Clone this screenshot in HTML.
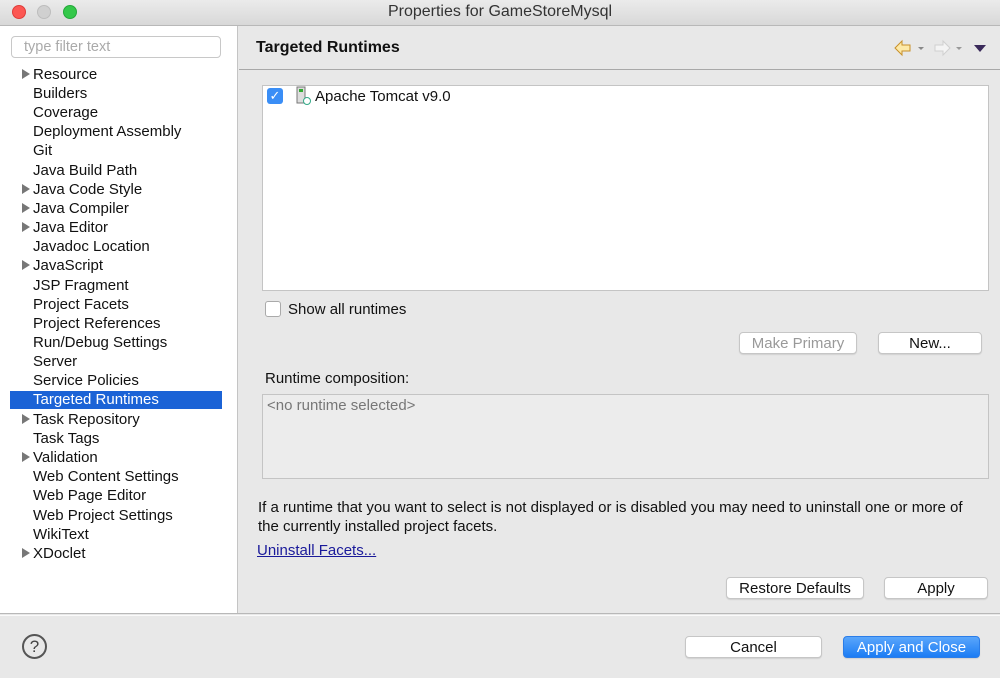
<!DOCTYPE html><html><head><style>
*{margin:0;padding:0;box-sizing:border-box}
body{width:1000px;height:678px;overflow:hidden;background:#e8e8e8;font-family:"Liberation Sans",sans-serif;font-size:15px;color:#111;position:relative}
.a{position:absolute}
.tb{left:0;top:0;width:1000px;height:26px;background:linear-gradient(#ebebeb,#d8d8d8);border-bottom:1px solid #b8b8b8;text-align:center;line-height:24px;font-size:16px;color:#333}
.dot{top:5px;width:14px;height:14px;border-radius:50%}
.left{left:0;top:26px;width:238px;height:587px;background:#fff;border-right:1px solid #c4c4c4}
.filter{left:11px;top:36px;width:210px;height:22px;border:1px solid #c8c8c8;border-radius:4px;color:#aaa;padding-left:12px;line-height:21px;font-size:14.5px;background:#fff}
.it{left:33px;height:19px;line-height:21px;white-space:nowrap}
.tri{left:22px;width:0;height:0;border-left:8px solid #777;border-top:5px solid transparent;border-bottom:5px solid transparent}
.sel{left:10px;top:391px;width:212px;height:18px;background:#1b63d6}
.btn{background:#fff;border:1px solid #c6c6c6;border-radius:4px;text-align:center;height:22px;line-height:22px;box-shadow:0 1px 1px rgba(0,0,0,.1)}
</style></head><body>
<div class="a tb">Properties for GameStoreMysql</div>
<div class="a dot" style="left:12px;background:#fc5753;border:1px solid #df3d3a"></div>
<div class="a dot" style="left:37px;background:#d0d0d0;border:1px solid #bdbdbd"></div>
<div class="a dot" style="left:63px;background:#34c84a;border:1px solid #24a83a"></div>
<div class="a left"></div>
<div class="a filter">type filter text</div>
<div class="a sel"></div>
<div class="a tri" style="top:69px"></div><div class="a it" style="top:64px">Resource</div>
<div class="a it" style="top:83px">Builders</div>
<div class="a it" style="top:102px">Coverage</div>
<div class="a it" style="top:121px">Deployment Assembly</div>
<div class="a it" style="top:140px">Git</div>
<div class="a it" style="top:160px">Java Build Path</div>
<div class="a tri" style="top:184px"></div><div class="a it" style="top:179px">Java Code Style</div>
<div class="a tri" style="top:203px"></div><div class="a it" style="top:198px">Java Compiler</div>
<div class="a tri" style="top:222px"></div><div class="a it" style="top:217px">Java Editor</div>
<div class="a it" style="top:236px">Javadoc Location</div>
<div class="a tri" style="top:260px"></div><div class="a it" style="top:255px">JavaScript</div>
<div class="a it" style="top:275px">JSP Fragment</div>
<div class="a it" style="top:294px">Project Facets</div>
<div class="a it" style="top:313px">Project References</div>
<div class="a it" style="top:332px">Run/Debug Settings</div>
<div class="a it" style="top:351px">Server</div>
<div class="a it" style="top:370px">Service Policies</div>
<div class="a it" style="top:389px;color:#fff">Targeted Runtimes</div>
<div class="a tri" style="top:414px"></div><div class="a it" style="top:409px">Task Repository</div>
<div class="a it" style="top:428px">Task Tags</div>
<div class="a tri" style="top:452px"></div><div class="a it" style="top:447px">Validation</div>
<div class="a it" style="top:466px">Web Content Settings</div>
<div class="a it" style="top:485px">Web Page Editor</div>
<div class="a it" style="top:505px">Web Project Settings</div>
<div class="a it" style="top:524px">WikiText</div>
<div class="a tri" style="top:548px"></div><div class="a it" style="top:543px">XDoclet</div>

<div class="a" style="left:256px;top:39px;font-size:16px;font-weight:bold">Targeted Runtimes</div>
<svg class="a" style="left:892px;top:38px" width="100" height="20"><path d="M3 10 L10 3 V7 H18 V13 H10 V17 Z" fill="#fde9a8" stroke="#c8902a"/><path d="M26 9 l3 3 l3-3z" fill="#888"/><path d="M58 10 L51 3 V7 H43 V13 H51 V17 Z" fill="#f4f4f4" stroke="#d0d0d0"/><path d="M64 9 l3 3 l3-3z" fill="#999"/><path d="M82 7 h12 l-6 7z" fill="#3a2a5a"/></svg>
<div class="a" style="left:239px;top:69px;width:761px;height:1px;background:#a8a8a8"></div>
<div class="a" style="left:262px;top:85px;width:727px;height:206px;background:#fff;border:1px solid #c4c4c4"></div>
<div class="a" style="left:267px;top:88px;width:16px;height:16px;border-radius:3px;background:#3a8ef6;color:#fff;font-size:13px;text-align:center;line-height:16px">✓</div>
<svg class="a" style="left:295px;top:86px" width="18" height="20"><rect x="2" y="1" width="8" height="16" fill="#ddd" stroke="#777"/><rect x="4" y="3" width="4" height="3" fill="#3a3"/><circle cx="12" cy="15" r="3.5" fill="#fff" stroke="#3a8"/></svg>
<div class="a" style="left:315px;top:88px">Apache Tomcat v9.0</div>
<div class="a" style="left:265px;top:301px;width:16px;height:16px;border:1px solid #aaa;border-radius:3px;background:#fff"></div>
<div class="a" style="left:288px;top:301px">Show all runtimes</div>
<div class="a btn" style="left:739px;top:332px;width:118px;color:#999">Make Primary</div>
<div class="a btn" style="left:878px;top:332px;width:104px">New...</div>
<div class="a" style="left:265px;top:370px">Runtime composition:</div>
<div class="a" style="left:262px;top:394px;width:727px;height:85px;border:1px solid #c4c4c4;background:#ececec;color:#777;padding:2px 4px">&lt;no runtime selected&gt;</div>
<div class="a" style="left:258px;top:498px;width:715px;line-height:19px">If a runtime that you want to select is not displayed or is disabled you may need to uninstall one or more of the currently installed project facets.</div>
<div class="a" style="left:257px;top:542px;color:#1a1a9a;text-decoration:underline">Uninstall Facets...</div>
<div class="a btn" style="left:726px;top:577px;width:138px">Restore Defaults</div>
<div class="a btn" style="left:884px;top:577px;width:104px">Apply</div>
<div class="a" style="left:0;top:613px;width:1000px;height:1px;background:#b8b8b8"></div>
<div class="a" style="left:0;top:615px;width:1000px;height:1px;background:#fafafa"></div>
<div class="a" style="left:22px;top:634px;width:25px;height:25px;border:2px solid #555;border-radius:50%;text-align:center;line-height:21px;font-size:17px;color:#444">?</div>
<div class="a btn" style="left:685px;top:636px;width:137px">Cancel</div>
<div class="a btn" style="left:843px;top:636px;width:137px;background:linear-gradient(#5aa6fb,#1b7cf4);border-color:#2b7de8;color:#fff">Apply and Close</div>
</body></html>
